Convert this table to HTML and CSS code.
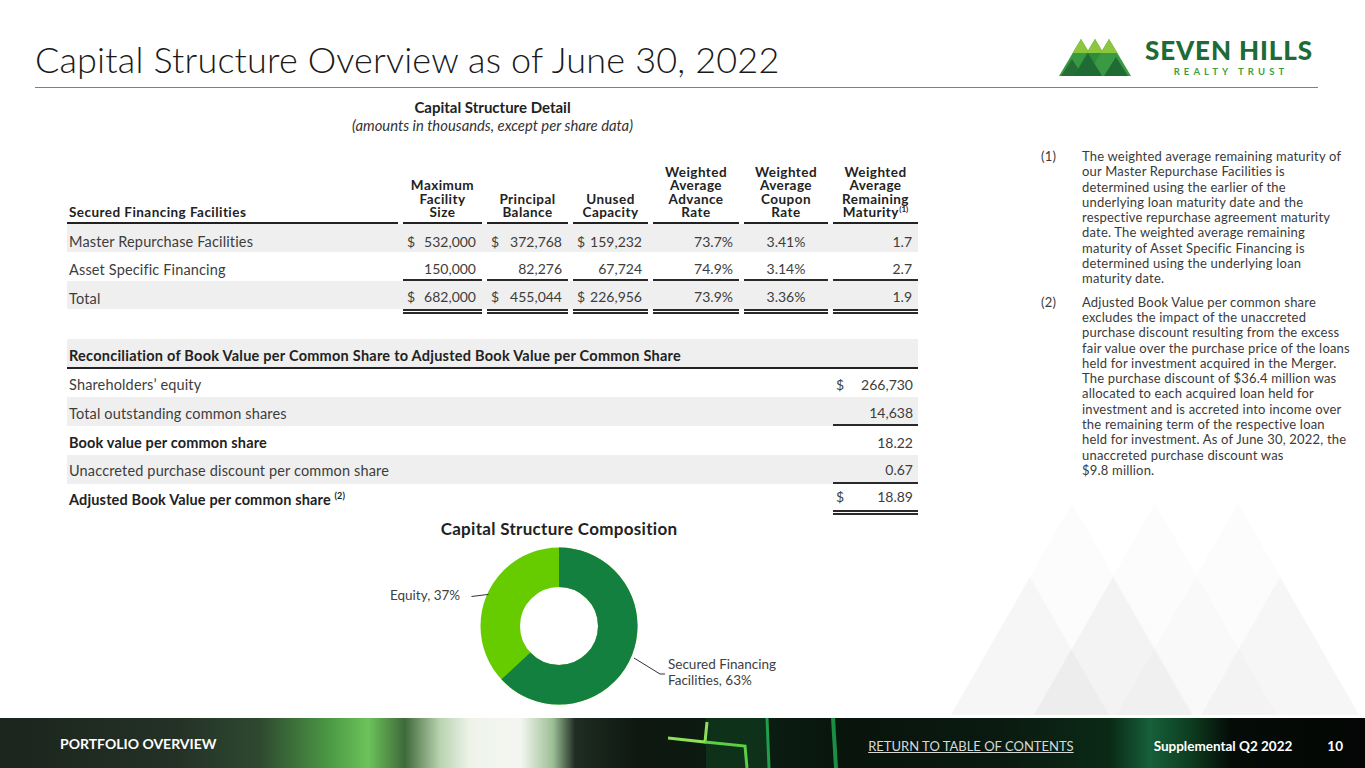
FILE: index.html
```html
<!DOCTYPE html>
<html lang="en">
<head>
<meta charset="utf-8">
<title>Capital Structure Overview</title>
<link rel="stylesheet" href="styles.css">
</head>
<body>
<div class="page">
  <svg class="bg-mountains" width="435" height="228" viewBox="930 490 435 228" aria-hidden="true">
    <polygon points="1072,503 950,715 1194,715" class="m1"/>
    <polygon points="1155,503 1033,715 1277,715" class="m1"/>
    <polygon points="1238,503 1116,715 1360,715" class="m1"/>
    <polygon points="1030,577 951,715 1109,715" class="m2"/>
    <polygon points="1113,577 1034,715 1192,715" class="m2"/>
    <polygon points="1280,577 1201,715 1359,715" class="m2"/>
  </svg>

  <header class="top">
    <h1 class="title">Capital Structure Overview as of June 30, 2022</h1>
    <div class="logo">
      <svg class="logo-mark" width="72" height="37" viewBox="0 0 72 37" aria-hidden="true">
        <polygon points="22,0 0,37 44,37" fill="#3a9a44"/>
        <polygon points="22,0 13.5,14 30.5,14" fill="#8cc63f"/>
        <polygon points="36,0 14,37 58,37" fill="#2f8c3d"/>
        <polygon points="36,0 27.5,14 44.5,14" fill="#8cc63f"/>
        <polygon points="50,0 28,37 72,37" fill="#3a9a44"/>
        <polygon points="50,0 41.5,14 58.5,14" fill="#8cc63f"/>
        <polygon points="13,20 2,37 24,37" fill="#256f36"/>
        <polygon points="29,14 15,37 43,37" fill="#1e6b33"/>
        <polygon points="57,18 45,37 69,37" fill="#1e6b33"/>
      </svg>
      <div class="logo-text">
        <div class="logo-name">SEVEN HILLS</div>
        <div class="logo-sub">REALTY TRUST</div>
      </div>
    </div>
  </header>

  <main class="content">
    <section class="left">
      <div class="caption">Capital Structure Detail</div>
      <div class="subcaption">(amounts in thousands, except per share data)</div>

      <div class="fin">
        <div class="frow fhead">
          <div class="cell"><div class="in lbl">Secured Financing Facilities</div></div>
          <div class="cell"><div class="in ctr">Maximum<br>Facility<br>Size</div></div>
          <div class="cell"><div class="in ctr">Principal<br>Balance</div></div>
          <div class="cell"><div class="in ctr">Unused<br>Capacity</div></div>
          <div class="cell"><div class="in ctr">Weighted<br>Average<br>Advance<br>Rate</div></div>
          <div class="cell"><div class="in ctr">Weighted<br>Average<br>Coupon<br>Rate</div></div>
          <div class="cell"><div class="in ctr">Weighted<br>Average<br>Remaining<br>Maturity <sup>(1)</sup></div></div>
        </div>

        <div class="frow shade">
          <div class="cell"><div class="in lbl">Master Repurchase Facilities</div></div>
          <div class="cell"><div class="in money"><span>$</span><span>532,000</span></div></div>
          <div class="cell"><div class="in money"><span>$</span><span>372,768</span></div></div>
          <div class="cell"><div class="in money"><span>$</span><span>159,232</span></div></div>
          <div class="cell"><div class="in num">73.7%</div></div>
          <div class="cell"><div class="in ctrv">3.41%</div></div>
          <div class="cell"><div class="in num">1.7</div></div>
        </div>

        <div class="frow">
          <div class="cell"><div class="in lbl">Asset Specific Financing</div></div>
          <div class="cell"><div class="in money ul"><span></span><span>150,000</span></div></div>
          <div class="cell"><div class="in money ul"><span></span><span>82,276</span></div></div>
          <div class="cell"><div class="in money ul"><span></span><span>67,724</span></div></div>
          <div class="cell"><div class="in num ul">74.9%</div></div>
          <div class="cell"><div class="in ctrv ul">3.14%</div></div>
          <div class="cell"><div class="in num ul">2.7</div></div>
        </div>

        <div class="frow total">
          <div class="cell"><div class="in lbl">Total</div></div>
          <div class="cell"><div class="in money dbl"><span>$</span><span>682,000</span></div></div>
          <div class="cell"><div class="in money dbl"><span>$</span><span>455,044</span></div></div>
          <div class="cell"><div class="in money dbl"><span>$</span><span>226,956</span></div></div>
          <div class="cell"><div class="in num dbl">73.9%</div></div>
          <div class="cell"><div class="in ctrv dbl">3.36%</div></div>
          <div class="cell"><div class="in num dbl">1.9</div></div>
        </div>
      </div>

      <div class="recon">
        <div class="rrow rhead">
          <div class="rl">Reconciliation of Book Value per Common Share to Adjusted Book Value per Common Share</div>
          <div class="rv"></div>
        </div>
        <div class="rrow">
          <div class="rl">Shareholders’ equity</div>
          <div class="rv"><div class="rin money"><span>$</span><span>266,730</span></div></div>
        </div>
        <div class="rrow shade">
          <div class="rl">Total outstanding common shares</div>
          <div class="rv"><div class="rin money ul"><span></span><span>14,638</span></div></div>
        </div>
        <div class="rrow bold">
          <div class="rl">Book value per common share</div>
          <div class="rv"><div class="rin money norm"><span></span><span>18.22</span></div></div>
        </div>
        <div class="rrow shade">
          <div class="rl">Unaccreted purchase discount per common share</div>
          <div class="rv"><div class="rin money ul"><span></span><span>0.67</span></div></div>
        </div>
        <div class="rrow bold last">
          <div class="rl"><span>Adjusted Book Value per common share&nbsp;<sup>(2)</sup></span></div>
          <div class="rv"><div class="rin money dbl norm"><span>$</span><span>18.89</span></div></div>
        </div>
      </div>

      <div class="chart">
        <div class="chart-title">Capital Structure Composition</div>
        <svg class="donut" width="420" height="176" viewBox="0 0 420 176">
          <circle cx="179" cy="89" r="58.75" fill="none" stroke="#66cc00" stroke-width="39.5"/>
          <circle cx="179" cy="89" r="58.75" fill="none" stroke="#138040" stroke-width="39.5"
                  stroke-dasharray="232.56 400" transform="rotate(-90 179 89)"/>
          <polyline points="91.5,59.5 108.5,57.4" fill="none" stroke="#333" stroke-width="1"/>
          <polyline points="254,121 280,137 285,137" fill="none" stroke="#333" stroke-width="1"/>
          <text x="10" y="63" class="dl">Equity, 37%</text>
          <text x="288" y="132" class="dl">Secured Financing</text>
          <text x="288" y="148" class="dl">Facilities, 63%</text>
        </svg>
      </div>
    </section>

    <aside class="notes">
      <div class="note">
        <div class="nn">(1)</div>
        <div class="nt">The weighted average remaining maturity of<br>our Master Repurchase Facilities is<br>determined using the earlier of the<br>underlying loan maturity date and the<br>respective repurchase agreement maturity<br>date. The weighted average remaining<br>maturity of Asset Specific Financing is<br>determined using the underlying loan<br>maturity date.</div>
      </div>
      <div class="note">
        <div class="nn">(2)</div>
        <div class="nt">Adjusted Book Value per common share<br>excludes the impact of the unaccreted<br>purchase discount resulting from the excess<br>fair value over the purchase price of the loans<br>held for investment acquired in the Merger.<br>The purchase discount of $36.4 million was<br>allocated to each acquired loan held for<br>investment and is accreted into income over<br>the remaining term of the respective loan<br>held for investment. As of June 30, 2022, the<br>unaccreted purchase discount was<br>$9.8 million.</div>
      </div>
    </aside>
  </main>

  <footer class="foot">
    <svg class="foot-art" width="1365" height="50" viewBox="0 0 1365 50" aria-hidden="true">
      <rect x="706" y="0" width="62" height="50" fill="#0f3a1c" opacity="0.7"/>
      <polyline points="668,20 705,24 707,4" fill="none" stroke="#8ee05a" stroke-width="3"/>
      <polyline points="705,24 745,28 747,50" fill="none" stroke="#5ccf45" stroke-width="3"/>
      <line x1="767" y1="0" x2="769" y2="50" stroke="#1fa04a" stroke-width="3"/>
      <line x1="833" y1="0" x2="836" y2="50" stroke="#1a8e44" stroke-width="4"/>
    </svg>
    <div class="foot-left">PORTFOLIO OVERVIEW</div>
    <div class="foot-right">
      <span class="toc">RETURN TO TABLE OF CONTENTS</span>
      <span class="supp">Supplemental Q2 2022</span>
      <span class="pg">10</span>
    </div>
  </footer>
</div>
</body>
</html>
```

FILE: styles.css
```css
* { box-sizing: border-box; margin: 0; padding: 0; }

html, body {
  width: 1365px;
  height: 768px;
  overflow: hidden;
  background: #ffffff;
}

body {
  font-family: "Lato", "Noto Sans", sans-serif;
  color: #3a3a3a;
}

.page {
  position: relative;
  width: 1365px;
  height: 768px;
  display: flex;
  flex-direction: column;
}

/* decorative background mountains */
.bg-mountains {
  position: absolute;
  left: 930px;
  top: 490px;
  z-index: 0;
}
.bg-mountains .m1 { fill: #000; fill-opacity: 0.012; }
.bg-mountains .m2 { fill: #000; fill-opacity: 0.022; }

/* header */
.top {
  position: relative;
  z-index: 1;
  height: 88px;
  margin: 0 47px 0 35px;
  border-bottom: 1px solid #808080;
  display: flex;
  justify-content: space-between;
  align-items: flex-end;
}

.title {
  font-weight: 300;
  font-size: 36px;
  line-height: 40px;
  color: #1a1a1a;
  padding-bottom: 8px;
  letter-spacing: 0.17px;
}

.logo {
  display: flex;
  align-items: flex-start;
  margin: 0 5px 10px 0;
  gap: 14px;
}
.logo-mark { display: block; }
.logo-text {
  display: flex;
  flex-direction: column;
  align-items: center;
}
.logo-name {
  font-weight: 900;
  font-size: 26px;
  line-height: 24px;
  letter-spacing: 0.9px;
  color: #1f6b36;
  margin-top: -1px;
}
.logo-sub {
  font-weight: 700;
  font-size: 9.5px;
  line-height: 10px;
  letter-spacing: 4.1px;
  color: #3f9e3f;
  margin-top: 5px;
  padding-left: 4px;
}

/* content */
.content {
  position: relative;
  z-index: 1;
  flex: 1;
  display: flex;
}

.left {
  width: 851px;
  margin-left: 67px;
}

.caption {
  margin-top: 10px;
  text-align: center;
  font-weight: 700;
  font-size: 15px;
  line-height: 18px;
  color: #222;
}
.subcaption {
  text-align: center;
  font-style: italic;
  font-size: 14.8px;
  line-height: 18px;
  color: #333;
}

/* financing table */
.fin { margin-top: 32px; font-size: 14.5px; letter-spacing: 0.15px; }

.frow {
  display: grid;
  grid-template-columns: 331px 84px 86px 80px 91px 89px 90px;
  height: 28.5px;
}
.frow .cell { padding-left: 5px; }
.frow .cell:first-child { padding-left: 0; }
.frow .in {
  height: 100%;
  display: flex;
  align-items: center;
  padding-top: 7px;
  color: #3d3d3d;
}
.frow .lbl { padding-left: 2px; }
.frow .money, .frow .num, .frow .ctrv { font-size: 14px; letter-spacing: 0; }
.frow .money { justify-content: space-between; padding-left: 4px; padding-right: 6px; }
.frow .num { justify-content: flex-end; padding-right: 6px; }
.frow .ctrv { justify-content: center; }

.shade { background: #efefef; }

.fhead { height: auto; }
.fhead .cell { display: flex; align-items: flex-end; }
.fhead .in {
  width: 100%;
  display: block;
  height: auto;
  padding-top: 0;
  font-weight: 700;
  font-size: 13.5px;
  letter-spacing: 0.45px;
  line-height: 13.4px;
  color: #222;
  padding-bottom: 2px;
  border-bottom: 2px solid #222;
}
.fhead .ctr { text-align: center; }
.fhead sup {
  font-size: 8px;
  line-height: 0;
  vertical-align: 5px;
  font-weight: 700;
  margin-left: -3px;
  letter-spacing: 0;
}

.ul { border-bottom: 2px solid #2a2a2a; }

.total {
  height: 33px;
  background: linear-gradient(#efefef, #efefef) top left / 100% 28px no-repeat;
}
.total .in { height: 33px; padding-top: 3px; padding-bottom: 0; }
.dbl { border-bottom: 5px double #2a2a2a; }

/* reconciliation table */
.recon { margin-top: 25px; font-size: 14.5px; letter-spacing: 0.15px; }

.rrow {
  display: grid;
  grid-template-columns: 761px 90px;
  height: 28.8px;
  color: #3d3d3d;
}
.rrow .rl {
  display: flex;
  align-items: center;
  padding-left: 2px;
  padding-top: 3px;
  white-space: nowrap;
}
.rrow .rv { padding-left: 5px; }
.rrow .rin {
  height: 100%;
  display: flex;
  align-items: center;
  justify-content: space-between;
  padding: 3px 5px 0 3px;
  font-size: 14px;
  letter-spacing: 0;
}
.rrow.bold .rl { font-weight: 700; color: #222; }
.rrow .norm { font-weight: 400; }
.rrow .rin.ul { border-bottom: 2px solid #2a2a2a; }
.rrow sup {
  font-size: 9px;
  line-height: 0;
  vertical-align: 6px;
  font-weight: 700;
}

.rhead {
  height: 30px;
  background: #efefef;
  border-bottom: 2px solid #222;
}
.rhead .rl {
  align-items: flex-end;
  padding-bottom: 3px;
  font-weight: 700;
  font-size: 14.5px;
  letter-spacing: 0.25px;
  color: #222;
}

.rrow.last { height: 31px; }
.rrow.last .rl { padding-top: 0; }
.rrow.last .rin { height: 31px; padding-top: 0; }

/* chart */
.chart {
  width: 420px;
  margin-left: 313px;
  margin-top: 4px;
}
.chart-title {
  width: 358px;
  text-align: center;
  font-weight: 700;
  font-size: 17px;
  letter-spacing: 0.3px;
  line-height: 20px;
  color: #222;
}
.donut { display: block; margin-top: -2px; }
.dl {
  font-family: "Lato", "Noto Sans", sans-serif;
  font-size: 13.5px;
  fill: #404040;
}

/* notes */
.notes {
  margin-left: 123px;
  padding-top: 61px;
  font-size: 13px;
  letter-spacing: 0.2px;
  line-height: 15.3px;
  color: #3a3a3a;
}
.note {
  display: flex;
  white-space: nowrap;
  margin-bottom: 8px;
}
.nn { width: 41px; }

/* footer */
.foot {
  position: relative;
  height: 50px;
  flex: none;
  display: flex;
  justify-content: space-between;
  align-items: center;
  color: #fff;
  background: linear-gradient(90deg,
    #1b241d 0px, #243226 180px, #2e4930 260px, #4c9a44 330px, #6cc35a 368px,
    #3f6a3a 405px, #b9d3b0 440px, #eef3ea 470px, #f4f7f1 520px, #9dbf95 553px,
    #1f2d22 575px, #0d1710 640px, #0b1d12 760px, #08140c 850px, #0a1a10 1000px,
    #0a2a16 1110px, #16603a 1150px, #0d3d20 1190px, #050c08 1230px, #030604 1365px);
}
.foot-art {
  position: absolute;
  left: 0;
  top: 0;
}
.foot-left {
  position: relative;
  margin-left: 60px;
  font-weight: 700;
  font-size: 14px;
}
.foot-right {
  position: relative;
  display: flex;
  align-items: center;
  margin-right: 22px;
  margin-top: 6px;
  font-size: 13.5px;
}
.toc {
  font-size: 13px;
  color: #d8d8d8;
  text-decoration: underline;
  margin-right: 80px;
}
.supp { font-weight: 700; margin-right: 35px; }
.pg { font-weight: 700; }
```
